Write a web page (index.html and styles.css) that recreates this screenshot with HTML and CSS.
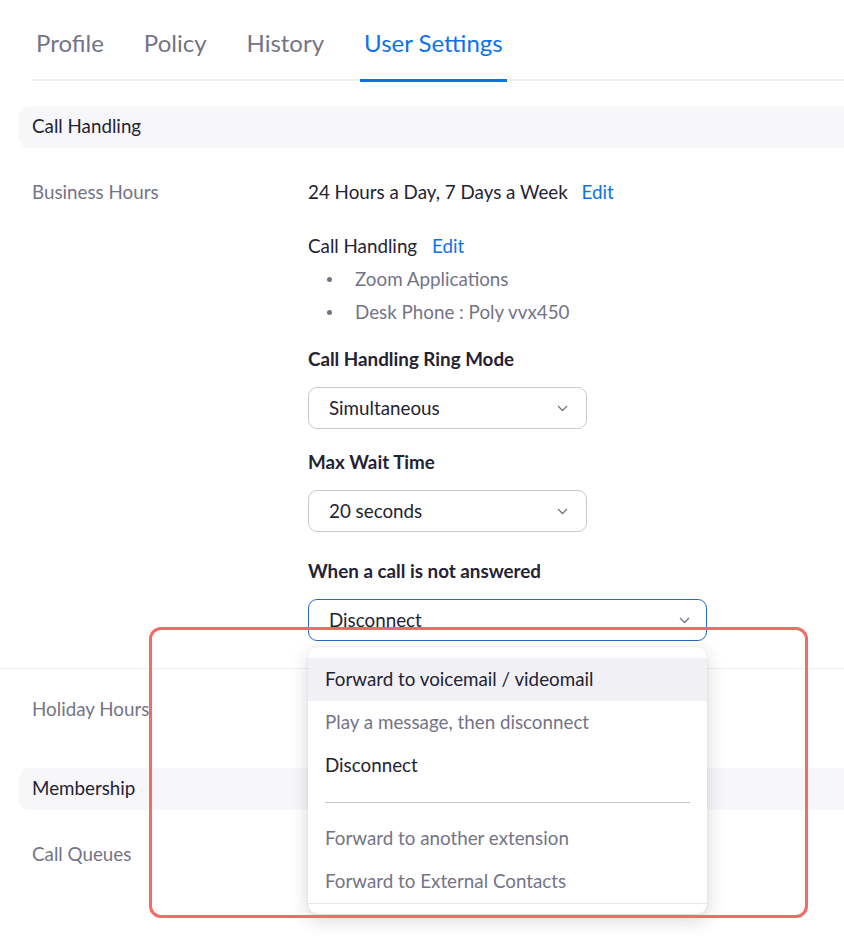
FILE: index.html
```html
<!DOCTYPE html>
<html lang="en">
<head>
<meta charset="utf-8">
<title>User Settings</title>
<link rel="stylesheet" href="styles.css">
</head>
<body>
<div class="page">
  <nav class="tabs">
    <a class="tab">Profile</a>
    <a class="tab">Policy</a>
    <a class="tab">History</a>
    <a class="tab active">User Settings</a>
  </nav>

  <div class="section-head">Call Handling</div>

  <div class="row row-first">
    <div class="label">Business Hours</div>
    <div class="value">
      <div class="line">24 Hours a Day, 7 Days a Week <a class="edit">Edit</a></div>
      <div class="line sub-head">Call Handling <a class="edit edit-sm">Edit</a></div>
      <ul class="bullets">
        <li>Zoom Applications</li>
        <li>Desk Phone : Poly vvx450</li>
      </ul>
      <div class="field-label fl-ring">Call Handling Ring Mode</div>
      <div class="select">
        <span>Simultaneous</span>
        <svg class="chev" width="11" height="7" viewBox="0 0 11 7"><path d="M1 1l4.5 4.5L10 1" fill="none" stroke="#747487" stroke-width="1.3"/></svg>
      </div>
      <div class="field-label fl-wait">Max Wait Time</div>
      <div class="select">
        <span>20 seconds</span>
        <svg class="chev" width="11" height="7" viewBox="0 0 11 7"><path d="M1 1l4.5 4.5L10 1" fill="none" stroke="#747487" stroke-width="1.3"/></svg>
      </div>
      <div class="field-label fl-when">When a call is not answered</div>
      <div class="select-wrap">
        <div class="select select-wide open">
          <span>Disconnect</span>
          <svg class="chev" width="11" height="7" viewBox="0 0 11 7"><path d="M1 1l4.5 4.5L10 1" fill="none" stroke="#747487" stroke-width="1.3"/></svg>
        </div>
        <div class="menu">
          <div class="opt hover">Forward to voicemail / videomail</div>
          <div class="opt muted">Play a message, then disconnect</div>
          <div class="opt">Disconnect</div>
          <div class="sep"></div>
          <div class="opt muted">Forward to another extension</div>
          <div class="opt muted">Forward to External Contacts</div>
          <div class="opt muted bordered"></div>
        </div>
      </div>
    </div>
  </div>

  <div class="row row-holiday">
    <div class="label">Holiday Hours</div>
  </div>

  <div class="section-head">Membership</div>

  <div class="row row-first">
    <div class="label">Call Queues</div>
  </div>

  <div class="annotation"></div>
</div>
</body>
</html>
```

FILE: styles.css
```css
* { box-sizing: border-box; }

html, body {
  margin: 0;
  padding: 0;
  background: #ffffff;
}

body {
  font-family: Lato, "Open Sans", "Liberation Sans", sans-serif;
  color: #232333;
  font-size: 18.8px;
  line-height: 24px;
  overflow: hidden;
}

.page {
  position: relative;
  width: 844px;
  height: 942px;
  overflow: hidden;
}

.tabs {
  display: flex;
  gap: 32px;
  margin-left: 32px;
  height: 81px;
  border-bottom: 2px solid #eeeef3;
}

.tab {
  display: block;
  padding: 0 4px;
  font-size: 24px;
  line-height: 30px;
  padding-top: 28px;
  color: #747487;
  height: 82px;
}

.tab.active {
  color: #0e71eb;
  border-bottom: 3px solid #0e71eb;
}

.section-head {
  margin-top: 25px;
  margin-left: 19px;
  height: 42px;
  padding: 8px 0 0 13px;
  background: #f7f7fa;
  border-radius: 10px 0 0 10px;
  color: #232333;
}

.row {
  display: flex;
  padding-left: 32px;
}

.row-first {
  padding-top: 32px;
}

.label {
  width: 276px;
  flex: none;
  color: #747487;
}

.value {
  flex: 1;
}

.line {
  color: #232333;
}

.edit {
  color: #0e71eb;
  margin-left: 9px;
}

.edit-sm {
  margin-left: 10px;
}

.sub-head {
  margin-top: 30px;
}

.bullets {
  list-style: none;
  margin: 9px 0 0;
  padding: 0;
}

.bullets li {
  position: relative;
  padding-left: 47px;
  color: #747487;
}

.bullets li + li {
  margin-top: 9px;
}

.bullets li::before {
  content: "";
  position: absolute;
  left: 19px;
  top: 10px;
  width: 5px;
  height: 5px;
  border-radius: 50%;
  background: #747487;
}

.field-label {
  font-weight: 700;
  color: #232333;
  margin-bottom: 16px;
}

.fl-ring { margin-top: 23px; }
.fl-wait { margin-top: 21px; }
.fl-when { margin-top: 27px; }

.select {
  display: flex;
  align-items: center;
  justify-content: space-between;
  width: 279px;
  height: 42px;
  padding: 0 18px 0 20px;
  border: 1px solid #c9c9d4;
  border-radius: 9px;
  color: #232333;
}

.select-wrap {
  position: relative;
  width: 399px;
}

.select-wide {
  width: 399px;
  border-color: #2c69bf;
  padding-right: 16px;
}

.chev {
  display: block;
}

.menu {
  position: absolute;
  left: 0;
  top: calc(100% + 6px);
  width: 399px;
  height: 267px;
  overflow: hidden;
  background: #ffffff;
  border-radius: 10px;
  padding-top: 11px;
  box-shadow: 0 6px 18px rgba(35, 35, 51, 0.18), 0 0 2px rgba(35, 35, 51, 0.10);
  z-index: 2;
}

.opt {
  height: 43px;
  padding: 9px 17px 0;
  color: #232333;
  white-space: nowrap;
}

.opt.hover {
  background: #f1f1f5;
}

.opt.muted {
  color: #747487;
}

.opt.bordered {
  border-top: 1px solid #e7e7ee;
}

.sep {
  height: 30px;
  margin: 0 17px;
  position: relative;
}

.sep::after {
  content: "";
  position: absolute;
  left: 0;
  right: 0;
  top: 15px;
  height: 1px;
  background: #c4c4cf;
}

.row-holiday {
  margin-top: 27px;
  border-top: 1px solid #ededf3;
  padding-top: 28px;
  padding-bottom: 26px;
}

.row-holiday .label {
  color: #747487;
}

.row-holiday + .section-head {
  margin-top: 21px;
}

.annotation {
  position: absolute;
  left: 149px;
  top: 627px;
  width: 659px;
  height: 291px;
  border: 3px solid #f36b66;
  border-radius: 12px;
  z-index: 3;
  pointer-events: none;
}
```
